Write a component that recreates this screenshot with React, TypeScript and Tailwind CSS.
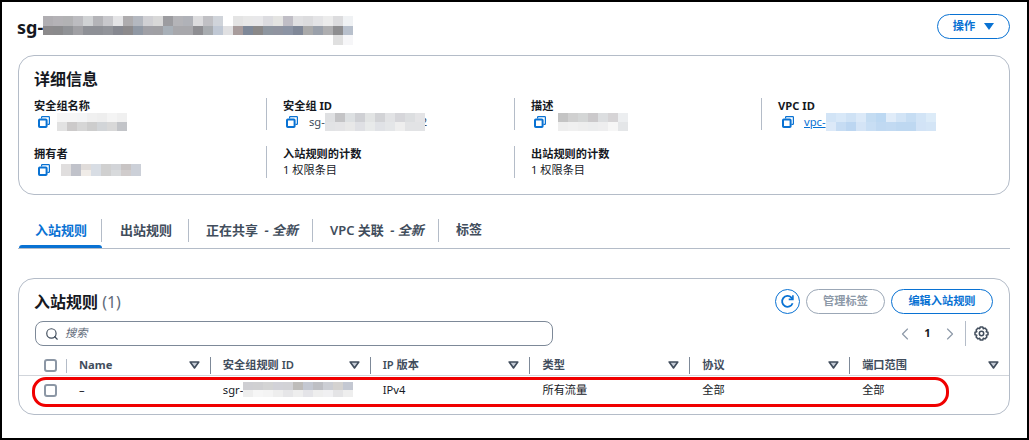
import React from "react";
import { Search, ChevronLeft, ChevronRight } from "lucide-react";

const FONT = "font-['Noto_Sans','Noto_Sans_CJK_SC',sans-serif]";

// pixelated (redacted) strings from the screenshot
const Mosaic = ({ rows, cell, rowH, className }: { rows: string[][]; cell: number; rowH: number; className?: string }) => (
    <div className={className}>
        {rows.map((row, i) => (
            <div key={i} className="flex">
                {row.map((c, j) => (
                    <div key={j} style={{ width: cell, height: rowH, background: c }} />
                ))}
            </div>
        ))}
    </div>
);

const w = "transparent";

const titleRows = [
    ["#b0aeb2", "#b4b2b6", "#b2b2b4", "#bcbcc0", "#d0d2d4", "#b4b4b8", "#c8c8cc", "#e4e4e6", "#aeacae", "#b4b8c0", "#d0d0d4", "#d8d8d8", "#9c9ca0", "#b4b4b8", "#b0b2b8", "#dcdcde", "#c0c0c4", "#d0d4da", w, "#e4e4e4", "#e8e8e8", "#e8e8ea", "#dcdce0", "#e4e4e2", "#c0bec6", "#e0e0e2", "#dcdcde", "#e4e4e6", "#ececec", "#dcdcde", "#f0f2f4"],
    ["#8c8a8c", "#8a8a8c", "#909296", "#a0a0a4", "#8e9096", "#8e9096", "#92949a", "#868890", "#8c8a8c", "#9098a4", "#a0a0a6", "#a0a0a4", "#a8b0b8", "#a8a8ac", "#a8a8ac", "#8e8e92", "#a8acb0", "#c0c8d4", "#e0e0e2", "#a89c9c", "#7e8898", "#8a8888", "#8e96a0", "#9094a0", "#8c94a4", "#808898", "#aaaaaa", "#9aa0aa", "#aeaeb0", "#8e8e90", "#b8c0cc"],
    [w, w, w, w, w, w, w, w, w, w, w, w, w, w, w, w, w, w, w, w, w, w, w, w, w, w, w, w, w, "#e0e0e0", "#f6f6f8"],
];
const nameRows = [
    ["#f6f6f6", "#f6f6f6", "#f4f5f6", "#f0f0f0", "#eeeeee", "#f4f4f4", "#f0f0f0"],
    ["#e2e2e2", "#cccaca", "#d6d6d6", "#cdcdcd", "#d2d5d8", "#d8d8d8", "#c2c4c8"],
];
const sgRows = [
    ["#dfe0e2", "#c4c4c6", "#dde0e2", "#cfd0d4", "#e2e4e4", "#d2d3d6", "#e2e3e5", "#d6d6da", "#dcdee0", "#e4e4e6"],
    ["#e2e3e5", "#e4e4e6", "#e8e8e8", "#dfe0e4", "#e8eaea", "#e0e2e6", "#e4e6e8", "#eeeeee", "#e2e3e5", "#e2e3e5"],
];
const descRows = [
    ["#c4c4c4", "#d0d0d0", "#d4d6d6", "#cbc9cb", "#dcdee0", "#d6d4d6", "#eceef0"],
    ["#eeeeee", "#f0f0f0", "#eeeeee", "#ecedee", "#eeeeef", "#f6f6f6", "#e4e6e8"],
];
const vpcRows = [
    ["#d2e4f6", "#d8e8f8", "#cfe2f5", "#dbe9f8", "#c4dcf2", "#bcd8f2", "#e0ecf9", "#d2e4f6", "#c6ddf3", "#d2e4f6", "#dcebf8"],
    ["#dce9f8", "#c6dcf3", "#bcd6f1", "#d4e4f6", "#c8def4", "#c0d9f2", "#c2daf2", "#bed8f1", "#bed8f1", "#d2e3f6", "#d4e5f6"],
];
const ownerRows = [
    ["#e0dede", "#c0c2ca", "#e0dcda", "#d8dde4", "#d0d0d0", "#d2d4d8", "#c8c4c4", "#ccd0d8"],
    ["#e0dede", "#c0c2ca", "#f0ece8", "#d8dde4", "#d0d0d0", "#d8dadc", "#d0cccc", "#ccd0d8"],
];
const sgrRows = [
    ["#cfcfd3", "#d0d0d2", "#d4d4d4", "#d2d2d8", "#d2d2d6", "#bebcba", "#c4c8d2", "#bebfc4", "#ccced4", "#d4d2d0", "#c4c8d2"],
    ["#eeeeee", "#f6f6f6", "#f4f4f4", "#eeeeee", "#e6e6e8", "#eeeeee", "#e4e4e8", "#eeeeee", "#f0f0f2", "#e4e4e6", "#eeeeee"],
];

const CopyIcon = () => (
    <svg width="12" height="12" viewBox="0 0 12 12" fill="none" stroke="#0972d3" className="shrink-0">
        <path d="M3.6 2.4 V1.3 Q3.6 .6 4.3 .6 H10.7 Q11.4 .6 11.4 1.3 V7.7 Q11.4 8.4 10.7 8.4 H9.4" strokeWidth="1.2" />
        <rect x="1" y="3.4" width="7.6" height="7.6" rx=".8" strokeWidth="2" />
    </svg>
);

const SortCaret = () => (
    <svg width="11" height="8" viewBox="0 0 11 8" className="shrink-0">
        <path d="M1.2 1 H9.8 L5.5 7 Z" fill="#c6ccd6" stroke="#414d5c" strokeWidth="1.6" strokeLinejoin="round" />
    </svg>
);

const Checkbox = () => <div className="h-[13px] w-[13px] rounded-[3px] border-2 border-[#8c97a5] bg-white" />;

const Field = ({ label, children, divider }: { label: string; children: React.ReactNode; divider?: boolean }) => (
    <div className={`h-[32px] pl-[16px] ${divider ? "border-l border-[#b4bcc8]" : ""}`}>
        <div className="h-[16px] text-[11.2px] leading-[15px] font-bold text-[#16191f]">{label}</div>
        <div className="flex h-[16px] items-center text-[11.2px] text-[#16191f]">{children}</div>
    </div>
);

const Tab = ({ children, active, className }: { children: React.ReactNode; active?: boolean; className?: string }) => (
    <div className={`relative flex h-[30px] items-start pt-[1px] ${className}`}>
        <div
            className={`flex h-[23px] w-full items-center border-r border-[#b4bcc8] text-[13px] font-semibold whitespace-pre ${
                active ? "pl-[16px] text-[#0972d3]" : "pl-[17px] text-[#414d5c]"
            }`}
        >
            {children}
        </div>
        {active && <div className="absolute right-0 bottom-0 left-0 h-[3px] rounded-t-sm bg-[#0972d3]" />}
    </div>
);

const New = () => <span className="ml-[3px] font-bold text-[#414d5c] italic"> - 全新</span>;

const Pill = ({ children, className }: { children: React.ReactNode; className?: string }) => (
    <div className={`flex h-[25px] items-center justify-center rounded-full border text-[11.2px] font-bold ${className}`}>{children}</div>
);

const columns = ["Name", "安全组规则 ID", "IP 版本", "类型", "协议", "端口范围"];

export default function App() {
    return (
        <div className={`${FONT} h-[440px] w-[1029px] overflow-hidden border-2 border-black bg-white pt-[12px] pr-[17px] pl-[16px]`}>
            {/* page header */}
            <div className="flex h-[28px] items-start justify-between">
                <div className="-ml-[1px] flex items-start">
                    <span className="mt-[1px] text-[18px] leading-[24px] font-bold text-[#16191f]">sg-</span>
                    <Mosaic rows={titleRows} cell={10} rowH={9.5} className="mt-[2px]" />
                </div>
                <Pill className="w-[73px] gap-[9px] border-[#0972d3] text-[#0972d3]">
                    操作
                    <svg width="10" height="7" viewBox="0 0 10 7"><path d="M0 0 H10 L5 7 Z" fill="#0972d3" /></svg>
                </Pill>
            </div>

            {/* details */}
            <div className="mt-[13px] h-[140px] rounded-[16px] border border-[#b4bcc8] pt-[12px] pr-[16px] pl-[15px]">
                <div className="h-[30px] text-[16px] leading-[22px] font-bold text-[#16191f]">详细信息</div>
                <div className="grid grid-cols-[232px_248px_247px_1fr] gap-y-[16px]">
                    <div className="h-[32px]">
                        <div className="h-[16px] text-[11.2px] leading-[15px] font-bold text-[#16191f]">安全组名称</div>
                        <div className="flex h-[16px] items-center pl-[4px]">
                            <CopyIcon />
                            <Mosaic rows={nameRows} cell={10} rowH={9} className="ml-[7px]" />
                        </div>
                    </div>
                    <Field label="安全组 ID" divider>
                        <div className="ml-[3px] flex items-center">
                            <CopyIcon />
                            <span className="ml-[11px] text-[#414d5c]">sg-</span>
                            <Mosaic rows={sgRows} cell={10} rowH={9} className="relative z-10" />
                            <span className="-ml-[4px] text-[#414d5c]">2</span>
                        </div>
                    </Field>
                    <Field label="描述" divider>
                        <div className="ml-[3px] flex items-center">
                            <CopyIcon />
                            <Mosaic rows={descRows} cell={10} rowH={9} className="ml-[12px]" />
                        </div>
                    </Field>
                    <Field label="VPC ID" divider>
                        <div className="ml-[4px] flex items-center">
                            <CopyIcon />
                            <span className="ml-[10px] text-[#0972d3] underline">vpc-</span>
                            <Mosaic rows={vpcRows} cell={10} rowH={9} />
                        </div>
                    </Field>
                    <div className="h-[32px]">
                        <div className="h-[16px] text-[11.2px] leading-[15px] font-bold text-[#16191f]">拥有者</div>
                        <div className="flex h-[16px] items-center pl-[4px]">
                            <CopyIcon />
                            <Mosaic rows={ownerRows} cell={10} rowH={6} className="ml-[11px]" />
                        </div>
                    </div>
                    <Field label="入站规则的计数" divider>1 权限条目</Field>
                    <Field label="出站规则的计数" divider>1 权限条目</Field>
                </div>
            </div>

            {/* tabs */}
            <div className="mt-[23px] flex h-[31px] border-b border-[#b4bcc8] pl-[1px]">
                <Tab active className="w-[83px]">入站规则</Tab>
                <Tab className="w-[87px] pl-[1px]">出站规则</Tab>
                <Tab className="w-[124px]">正在共享<New /></Tab>
                <Tab className="w-[126px]">VPC 关联<New /></Tab>
                <div className="flex h-[24px] items-center pl-[17px] text-[13px] font-semibold text-[#414d5c]">标签</div>
            </div>

            {/* inbound rules */}
            <div className="relative mt-[29px] h-[137px] rounded-[16px] border border-[#b4bcc8]">
                <div className="flex h-[42px] items-start justify-between pt-[10px] pr-[16px] pl-[15px]">
                    <div className="text-[16px] leading-[26px] font-bold text-[#16191f]">
                        入站规则 <span className="font-normal text-[#5f6b7a]">(1)</span>
                    </div>
                    <div className="flex gap-[6px]">
                        <div className="flex h-[25px] w-[25px] items-center justify-center rounded-full border border-[#0972d3]">
                            <svg width="15" height="15" viewBox="0 0 15 15" fill="none" stroke="#0972d3" strokeWidth="1.8">
                                <path d="M12.6 9.2 A5.4 5.4 0 1 1 11.4 3.6 L12.6 5" />
                                <path d="M12.9 1.2 V5.4 H8.7" strokeWidth="1.6" />
                            </svg>
                        </div>
                        <Pill className="w-[79px] border-[#9ba7b6] text-[#8d99a8]">管理标签</Pill>
                        <Pill className="w-[102px] border-[#0972d3] text-[#0972d3]">编辑入站规则</Pill>
                    </div>
                </div>

                <div className="flex h-[36px] items-start justify-between pr-[15px] pl-[16px]">
                    <div className="flex h-[25px] w-[518px] items-center gap-[6px] rounded-[8px] border border-[#7d8998] pl-[9px] text-[11.2px] text-[#5f6b7a] italic">
                        <Search size={14} color="#414d5c" strokeWidth={2} />
                        搜索
                    </div>
                    <div className="flex h-[25px] items-center">
                        <ChevronLeft size={20} color="#8d99a8" strokeWidth={1.4} />
                        <span className="mx-[9px] w-[7px] text-center text-[11.2px] font-bold text-[#16191f]">1</span>
                        <ChevronRight size={20} color="#8d99a8" strokeWidth={1.4} />
                        <div className="ml-[5px] h-[25px] w-px bg-[#b4bcc8]" />
                        {/* gear: toothed ring */}
                        <svg width="15" height="15" viewBox="0 0 15 15" fill="none" stroke="#414d5c" strokeWidth="1.5" strokeLinejoin="round" className="mr-[5px] ml-[8px]">
                            <path d="M6.2 1 H8.8 L9.3 2.8 L11 2.1 L12.9 4 L12.2 5.7 L14 6.2 V8.8 L12.2 9.3 L12.9 11 L11 12.9 L9.3 12.2 L8.8 14 H6.2 L5.7 12.2 L4 12.9 L2.1 11 L2.8 9.3 L1 8.8 V6.2 L2.8 5.7 L2.1 4 L4 2.1 L5.7 2.8 Z" />
                            <circle cx="7.5" cy="7.5" r="2.2" />
                        </svg>
                    </div>
                </div>

                {/* table */}
                <div className="flex h-[19px] items-center border-b border-[#d1d5db] pb-[1px]">
                    <div className="flex w-[49px] items-center pl-[25px]">
                        <Checkbox />
                        <div className="ml-[9px] h-[14px] w-px bg-[#b4bcc8]" />
                    </div>
                    <div className="flex w-[142px] items-center justify-between pr-[10px] pl-[11px] text-[11.2px] font-bold text-[#414d5c]">
                        {columns[0]}
                        <SortCaret />
                    </div>
                    {columns.slice(1).map((c) => (
                        <div key={c} className="flex w-[160px] items-center justify-between border-l border-[#7d8998] pr-[10px] pl-[12px] text-[11.2px] font-semibold text-[#414d5c]">
                            {c}
                            <SortCaret />
                        </div>
                    ))}
                </div>
                <div className="flex h-[28px] items-center text-[11.2px] text-[#16191f]">
                    <div className="flex w-[49px] items-center pl-[25px]">
                        <Checkbox />
                    </div>
                    <div className="w-[142px] pl-[11px]">–</div>
                    <div className="flex w-[160px] items-center pl-[13px]">
                        sgr-
                        <Mosaic rows={sgrRows} cell={10} rowH={7.5} />
                    </div>
                    <div className="w-[160px] pl-[13px]">IPv4</div>
                    <div className="w-[160px] pl-[13px]">所有流量</div>
                    <div className="w-[160px] pl-[13px]">全部</div>
                    <div className="w-[160px] pl-[13px]">全部</div>
                </div>

                {/* red annotation */}
                <div className="absolute top-[98px] left-[13px] h-[30px] w-[917px] rounded-[14px] border-[3px] border-[#f00000]" />
            </div>
        </div>
    );
}
